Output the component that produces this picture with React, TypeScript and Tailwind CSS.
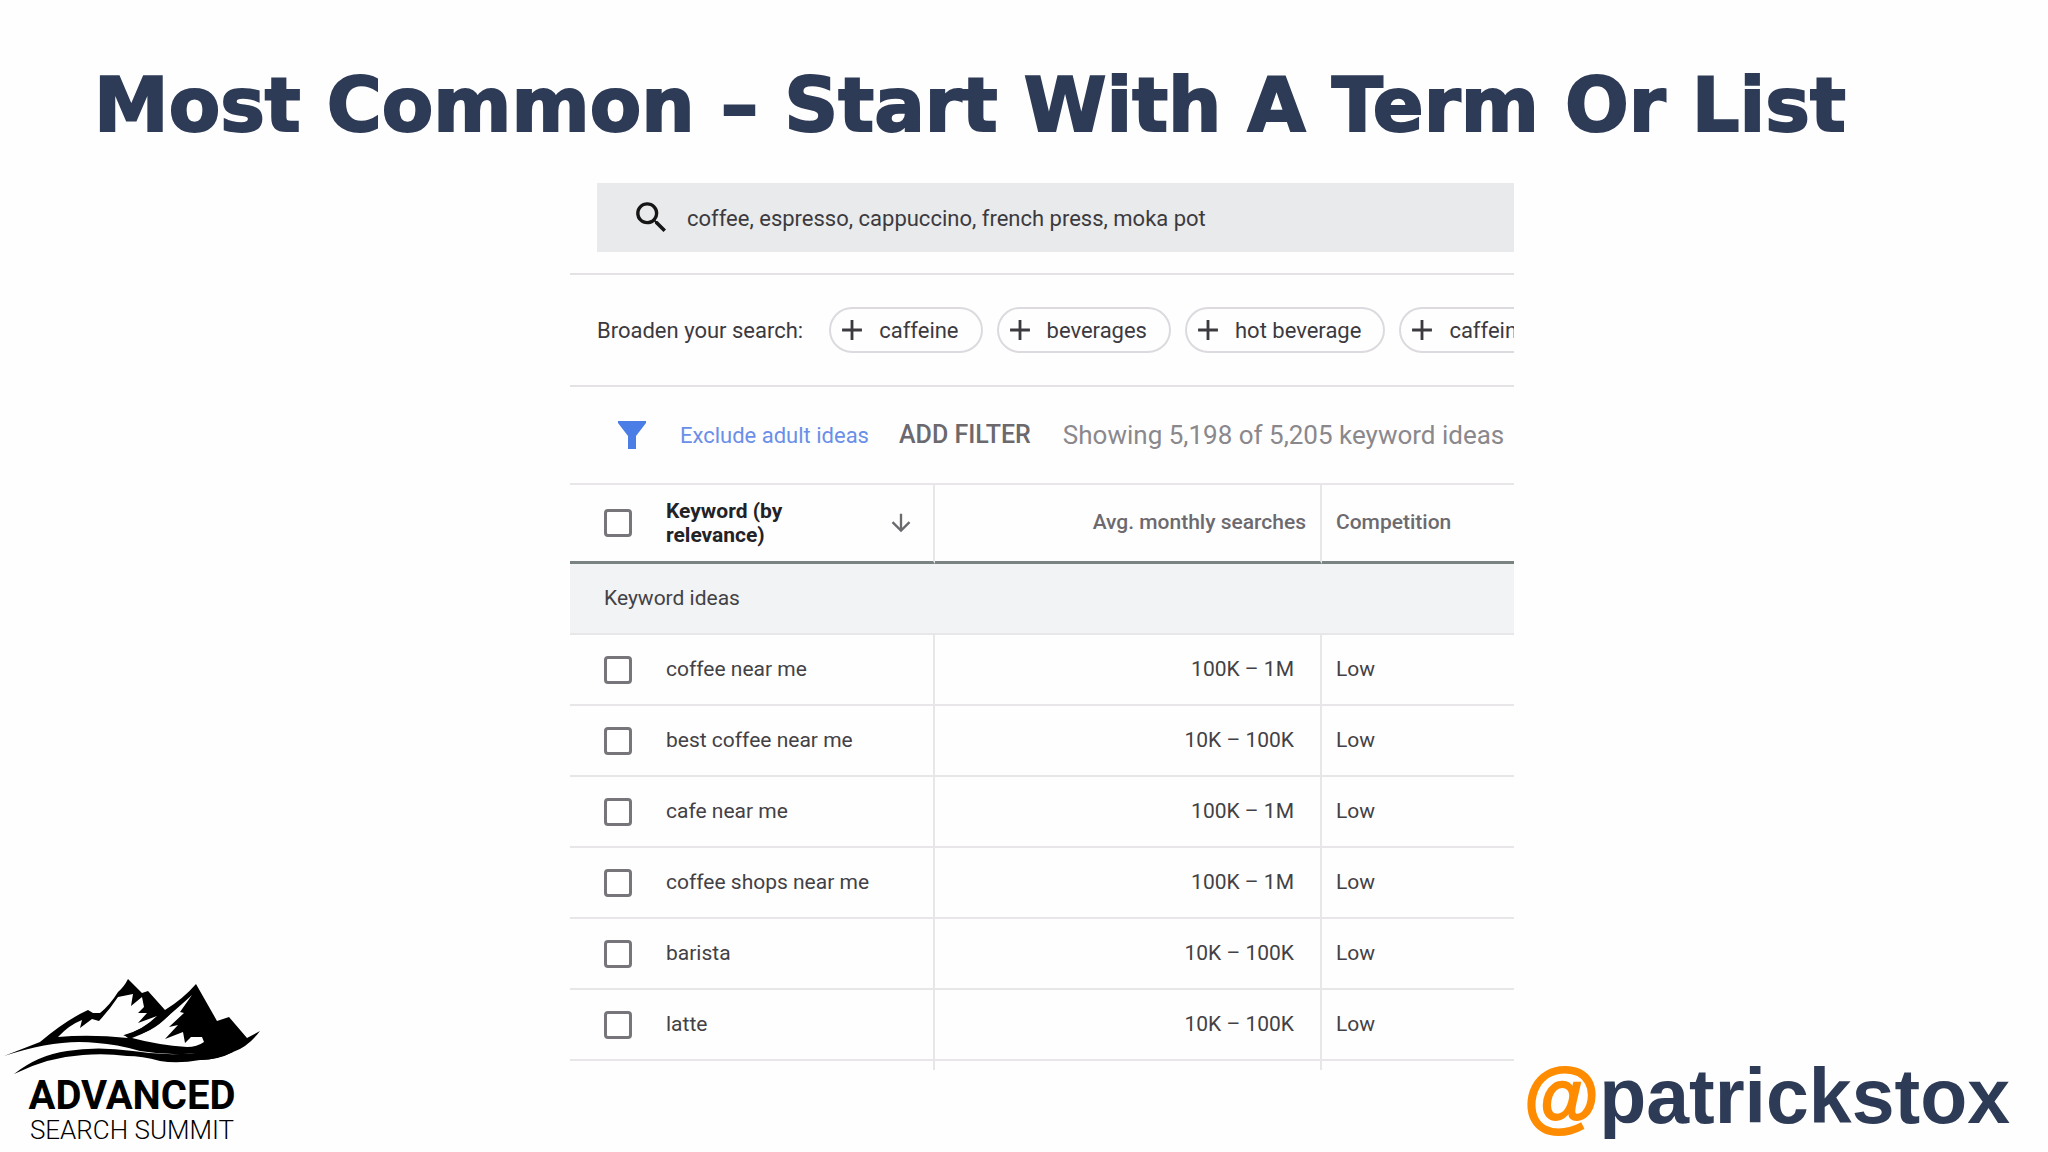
import { MdAdd, MdArrowDownward, MdSearch } from "react-icons/md"

const suggestions = ["caffeine", "beverages", "hot beverage", "caffeine free"]

const keywords = [
  { name: "coffee near me", searches: "100K – 1M", competition: "Low" },
  { name: "best coffee near me", searches: "10K – 100K", competition: "Low" },
  { name: "cafe near me", searches: "100K – 1M", competition: "Low" },
  { name: "coffee shops near me", searches: "100K – 1M", competition: "Low" },
  { name: "barista", searches: "10K – 100K", competition: "Low" },
  { name: "latte", searches: "10K – 100K", competition: "Low" },
]

function Checkbox({ id, label }: { id: string; label?: string }) {
  return (
    <input
      id={id}
      type="checkbox"
      aria-label={label}
      className="size-7 shrink-0 appearance-none rounded-sm border-3 border-[#77757a] bg-white checked:bg-[#4a7fe5]"
    />
  )
}

function FunnelIcon() {
  return (
    <svg viewBox="0 0 28 28" className="size-7 shrink-0 fill-[#4a7ee6]" aria-hidden="true">
      <path d="M0 0h28v2L18 15v13h-8V15L0 2z" />
    </svg>
  )
}

function Logo() {
  return (
    <div className="flex w-[264px] flex-col items-center font-[Roboto,sans-serif] text-black">
      <svg viewBox="0 0 264 100" className="w-full" aria-hidden="true">
        {/* Ridge line and the upper slope */}
        <path d="M4 80 L40 66 Q66 44 88 34 L93 37 L100 37 Q110 29 118 16 Q124 11 128 3 L142 17 L148 15 L165 34 Q183 23 196 8 L217 45 L229 41 L247 62 L260 55 Q248 71 233 76 Q219 83 200 84 L200 77 Q170 80 140 75 Q116 68 97 67 Q58 62 4 80 Z" />
        {/* Lower slope */}
        <path d="M14 98 Q38 79 67 75 Q97 70 133 75 Q170 81 204 76 L233 76 Q218 84 200 84 Q178 88 160 85 Q142 80 127 80 Q105 77 83 79 Q48 81 14 98 Z" />
        {/* Snow on the left range */}
        <path
          fill="#fefefe"
          d="M58 61 Q69 49 82 44 L80 52 L92 43 L99 45 Q110 33 118 21 L133 18 L131 30 L142 21 L144 31 L138 37 L147 37 L138 47 L157 40 Q143 54 124 59 L128 62 Q90 58 58 61 Z"
        />
        {/* Snow on the right peak */}
        <path
          fill="#fefefe"
          d="M132 62 Q150 56 167 41 Q181 29 192 19 L180 36 L184 37 L169 51 L178 49 L165 63 L183 56 L185 67 L191 61 L202 61 L204 66 Q197 71 187 71 Q158 69 132 62 Z"
        />
        <path d="M123 60 Q142 54 153 44 L165 34 L170 38 Q152 58 130 60 Z" />
      </svg>
      <p className="text-[40px] leading-10 font-bold">ADVANCED</p>
      <p className="text-[26px] leading-7 font-light">SEARCH SUMMIT</p>
    </div>
  )
}

function KeywordTable() {
  return (
    <table className="w-full table-fixed border-separate border-spacing-0 text-left text-[21px] text-[#434145]">
      <colgroup>
        <col className="w-[365px]" />
        <col className="w-[387px]" />
        <col />
      </colgroup>
      <thead>
        <tr className="h-[79px] text-[#6c6a6f]">
          <th className="border-r-2 border-b-3 border-r-[#e9e6ea] border-b-[#7b8282] p-0 pr-[18px] pl-[34px]">
            <div className="flex items-center gap-[34px]">
              <Checkbox id="all" label="Select all keywords" />
              <span className="w-36 leading-6 font-bold text-[#232226]">Keyword (by relevance)</span>
              <button type="button" aria-label="Sort by relevance" className="ml-auto">
                <MdArrowDownward className="size-7" />
              </button>
            </div>
          </th>
          <th className="border-r-2 border-b-3 border-r-[#e9e6ea] border-b-[#7b8282] p-0 pr-[14px] text-right font-medium">
            Avg. monthly searches
          </th>
          <th className="border-b-3 border-[#7b8282] p-0 pl-[14px] font-medium">Competition</th>
        </tr>
      </thead>
      <tbody>
        <tr className="h-[71px]">
          <td colSpan={3} className="border-b-2 border-[#e9e6ea] bg-[#f1f3f4] p-0 pl-[34px]">
            Keyword ideas
          </td>
        </tr>
        {keywords.map((keyword, i) => (
          <tr key={keyword.name} className="h-[71px]">
            <td className="border-r-2 border-b-2 border-[#e9e6ea] p-0 pl-[34px]">
              <div className="flex items-center gap-[34px]">
                <Checkbox id={`keyword-${i}`} />
                <label htmlFor={`keyword-${i}`}>{keyword.name}</label>
              </div>
            </td>
            <td className="border-r-2 border-b-2 border-[#e9e6ea] p-0 pr-[26px] text-right">{keyword.searches}</td>
            <td className="border-b-2 border-[#e9e6ea] p-0 pl-[14px]">{keyword.competition}</td>
          </tr>
        ))}
        <tr className="h-[9px]" aria-hidden="true">
          <td className="border-r-2 border-[#e9e6ea] p-0" />
          <td className="border-r-2 border-[#e9e6ea] p-0" />
          <td className="p-0" />
        </tr>
      </tbody>
    </table>
  )
}

export default function App() {
  return (
    <div className="flex min-h-screen flex-col bg-[#fefefe]">
      <h1 className="px-[94px] pt-[58px] pb-[30px] font-['DejaVu_Sans',sans-serif] text-[75px] leading-[95px] font-bold text-[#2e3b56] [-webkit-text-stroke:2px_#2e3b56]">
        Most Common – Start With A Term Or List
      </h1>

      <div className="grid flex-1 grid-cols-[minmax(0,570fr)_minmax(0,944fr)_minmax(0,534fr)]">
        <div className="self-end pb-2">
          <Logo />
        </div>

        {/* Keyword planner */}
        <main className="overflow-hidden font-[Roboto,sans-serif] text-[22px] text-[#3c3a3e]">
          <div className="ml-[27px] flex h-[69px] items-center bg-[#e8eaeb] pl-[34px]">
            <label htmlFor="terms" aria-label="Keywords">
              <MdSearch className="size-[41px] text-[#161617]" />
            </label>
            <input
              id="terms"
              type="text"
              defaultValue="coffee, espresso, cappuccino, french press, moka pot"
              className="ml-[15px] min-w-0 flex-1 bg-transparent pt-0.5 outline-none"
            />
          </div>

          <div className="mt-[21px] flex h-[114px] items-center gap-[14px] border-y-2 border-[#e4e2e5] pl-[27px] whitespace-nowrap">
            <span className="mr-3">Broaden your search:</span>
            {suggestions.map((name) => (
              <button
                key={name}
                type="button"
                className="flex h-[46px] shrink-0 items-center gap-2.5 rounded-full border-2 border-[#dddadf] pr-[22px] pl-1"
              >
                <MdAdd className="size-[34px]" />
                {name}
              </button>
            ))}
          </div>

          <div className="flex h-[98px] items-center border-b-2 border-[#e9e6ea] pl-12 whitespace-nowrap">
            <FunnelIcon />
            <button type="button" className="ml-[34px] text-[#6a8fe8]">
              Exclude adult ideas
            </button>
            <button type="button" className="ml-[30px] text-[25px] font-medium text-[#6b696d]">
              ADD FILTER
            </button>
            <span className="ml-8 text-[26px] text-[#8a888c]">Showing 5,198 of 5,205 keyword ideas</span>
          </div>

          <KeywordTable />
        </main>

        <p className="self-end pr-[38px] pb-[14px] text-right font-['Liberation_Sans',Arial,sans-serif] text-[77px] leading-[84px] font-bold text-[#2e3b56]">
          <span className="text-[#ff8c00] [-webkit-text-stroke:2px_#ff8c00]">@</span>patrickstox
        </p>
      </div>
    </div>
  )
}
